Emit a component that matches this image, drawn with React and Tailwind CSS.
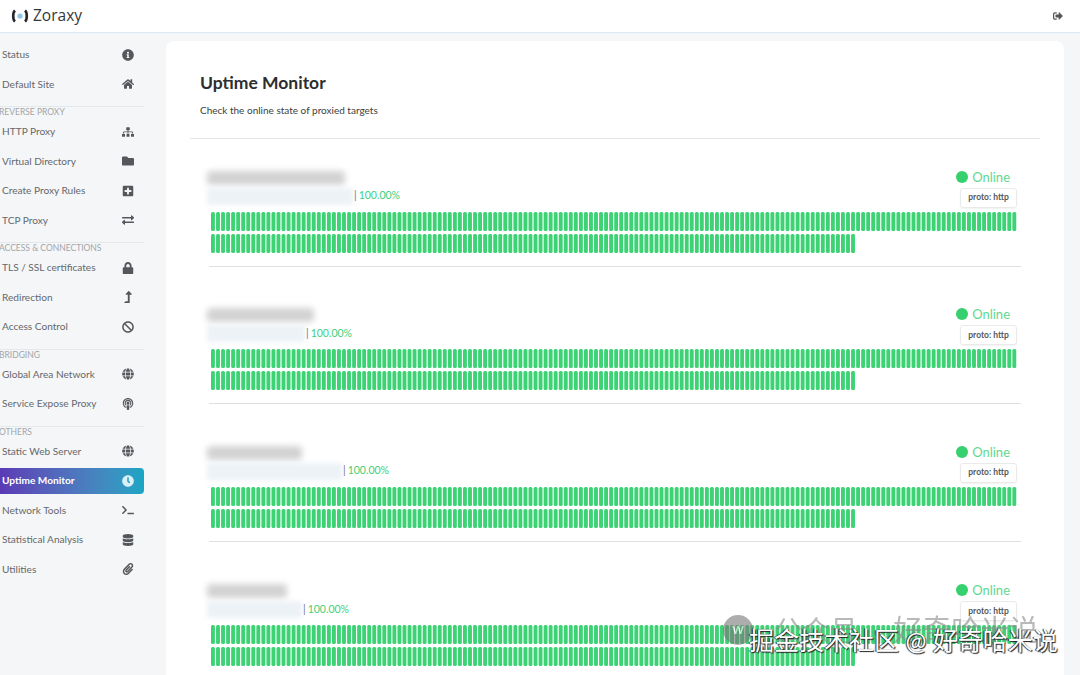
import React from 'react';
import {
    FaInfoCircle, FaHome, FaSitemap, FaFolder, FaPlusSquare, FaExchangeAlt, FaLock, FaLevelUpAlt,
    FaBan, FaGlobe, FaPodcast, FaClock, FaTerminal, FaDatabase, FaPaperclip, FaSignOutAlt,
} from 'react-icons/fa';

const menu = [
    { items: [['Status', FaInfoCircle], ['Default Site', FaHome]] },
    { title: 'REVERSE PROXY', items: [['HTTP Proxy', FaSitemap], ['Virtual Directory', FaFolder], ['Create Proxy Rules', FaPlusSquare], ['TCP Proxy', FaExchangeAlt]] },
    { title: 'ACCESS & CONNECTIONS', items: [['TLS / SSL certificates', FaLock], ['Redirection', FaLevelUpAlt], ['Access Control', FaBan]] },
    { title: 'BRIDGING', items: [['Global Area Network', FaGlobe], ['Service Expose Proxy', FaPodcast]] },
    { title: 'OTHERS', items: [['Static Web Server', FaGlobe], ['Uptime Monitor', FaClock], ['Network Tools', FaTerminal], ['Statistical Analysis', FaDatabase], ['Utilities', FaPaperclip]] },
];

const targets = [
    { nameW: 'w-[138px]', subW: 'w-[146px]' },
    { nameW: 'w-[107px]', subW: 'w-[98px]' },
    { nameW: 'w-[95px]', subW: 'w-[135px]' },
    { nameW: 'w-[80px]', subW: 'w-[95px]' },
];

function Logo() {
    return (
        <svg width="20" height="16" viewBox="0 0 20 16" className="ml-[10px]">
            <path d="M5 2.5C2.6 4.5 2.6 11.5 5 13.5" fill="none" stroke="#23272b" strokeWidth="2.6" />
            <path d="M15 2.5C17.4 4.5 17.4 11.5 15 13.5" fill="none" stroke="#23272b" strokeWidth="2.6" />
            <circle cx="10" cy="8" r="2.6" fill="#8ec5ec" />
        </svg>
    );
}

// 5 minute samples, drawn so the sub-pixel pitch stays even
function TickRow({ count }) {
    return (
        <svg width={count * 5.04} height="19" className="block">
            {Array.from({ length: count }, (_, index) => (
                <rect key={index} x={index * 5.04} y="0" width="3.9" height="19" rx="1.5" fill="#3dd375" />
            ))}
        </svg>
    );
}

function Sidebar() {
    return (
        <aside className="h-full w-[166px] shrink-0 pt-[7px]">
            {menu.map((group, groupIndex) => (
                <div key={groupIndex}>
                    {group.title && (
                        <div className="mt-[7px] w-[144px] border-t border-[#e6e7e8] pt-[1px]">
                            <div className="-ml-[1px] h-[9px] text-[8.5px] leading-[9px] whitespace-nowrap text-[#a2a5a8]">{group.title}</div>
                        </div>
                    )}
                    {group.items.map(([label, Icon]) => {
                        const active = label === 'Uptime Monitor';
                        return (
                            <div key={label} className="flex h-[29.5px] w-[144px] items-center">
                                <div
                                    className={`flex h-[26px] w-full items-center justify-between pr-[10px] pl-[2px] text-[10.1px] ${
                                        active
                                            ? 'rounded-r-[4px] bg-gradient-to-r from-[#5b3ab5] to-[#17a6c4] font-bold text-white'
                                            : 'text-[#64686c]'
                                    }`}
                                >
                                    <span>{label}</span>
                                    <span className="flex w-[12px] justify-center">
                                        <Icon className={`h-[12px] w-[12px] ${active ? 'text-[#d8f1f7]' : 'text-[#54585c]'}`} />
                                    </span>
                                </div>
                            </div>
                        );
                    })}
                </div>
            ))}
        </aside>
    );
}

function TargetRow({ target, first, last }) {
    return (
        <div className={`flex w-[812px] flex-col justify-end pb-[13px] ${first ? 'h-[127.5px]' : 'h-[137.5px]'} ${last ? '' : 'border-b border-[#dedfe0]'}`}>
            <div className="flex h-[44px] justify-between pr-[4px]">
                <div className="-ml-[2px] flex flex-col">
                    <div className={`mt-[3px] h-[14px] ${target.nameW} rounded-sm bg-[#d2d2d2] blur-[3px]`} />
                    <div className="mt-[3px] flex items-center">
                        <div className={`h-[17px] ${target.subW} bg-[#edf2f7] blur-[2px]`} />
                        <span className="ml-[1px] text-[10.5px] text-[#666]">|</span>
                        <span className="ml-[2px] text-[10.5px] text-[#3fd07a]">100.00%</span>
                    </div>
                </div>
                <div className="flex flex-col items-end">
                    <div className="flex items-center pr-[7px]">
                        <span className="h-[12px] w-[12px] rounded-full bg-[#37d06f]" />
                        <span className="ml-[4px] text-[13px] leading-[18px] text-[#5fd78f]">Online</span>
                    </div>
                    <div className="mt-[2px] flex h-[20px] w-[57px] items-center justify-center rounded-[3px] border border-[#eaeaea] text-[8.5px] font-bold text-[#55585b] shadow-[0_1px_2px_rgba(0,0,0,0.06)]">
                        proto: http
                    </div>
                </div>
            </div>
            <div className="ml-[2px] flex flex-col gap-[3px]">
                <TickRow count={160} />
                <TickRow count={128} />
            </div>
        </div>
    );
}

export default function App() {
    return (
        <div className="relative h-[675px] w-[1080px] overflow-hidden bg-[#f5f6f7] font-['Lato','Noto_Sans_CJK_SC',sans-serif]">
            <header className="flex h-[33px] items-center justify-between border-b border-[#d9e8f5] bg-white pr-[17px]">
                <div className="flex items-center gap-[3px]">
                    <Logo />
                    <span className="font-['Open_Sans',sans-serif] text-[15.5px] font-medium text-[#33373b]">Zoraxy</span>
                </div>
                <FaSignOutAlt className="h-[10px] w-[10px] text-[#55585b]" />
            </header>

            <div className="flex h-[642px]">
                <Sidebar />
                <main className="mt-[8px] h-full w-[898px] rounded-t-[8px] bg-white">
                    <div className="mx-[24px] h-[98px] w-[850px] border-b border-[#e5e6e7] pt-[30px] pl-[10px]">
                        <h1 className="text-[17.5px] leading-[24px] font-bold text-[#2c2e30]">Uptime Monitor</h1>
                        <p className="mt-[8px] text-[10px] leading-[14px] text-[#3c3e40]">Check the online state of proxied targets</p>
                    </div>
                    <div className="ml-[43px]">
                        {targets.map((target, index) => (
                            <TargetRow key={index} target={target} first={index === 0} last={index === targets.length - 1} />
                        ))}
                    </div>
                </main>
            </div>

            {/* watermark over the content */}
            <div className="absolute top-[615px] left-[723px] flex items-center opacity-60">
                <span className="flex h-[30px] w-[30px] items-center justify-center rounded-full bg-[#777] text-[11px] font-bold text-white">W</span>
                <span className="ml-[21px] text-[28px] leading-[30px] whitespace-nowrap text-[#8b8b8b]">公众号</span>
                <span className="mx-[14px] text-[28px] leading-[30px] text-[#8b8b8b]">·</span>
                <span className="text-[29px] leading-[30px] whitespace-nowrap text-[#8b8b8b]">好奇哈米说</span>
            </div>
            <div className="absolute top-[625px] left-[749px] text-[25px] leading-[30px] whitespace-nowrap text-white [text-shadow:1px_1px_1px_#222,-1px_0_1px_#222]">
                掘金技术社区 @ 好奇哈米说
            </div>
        </div>
    );
}
